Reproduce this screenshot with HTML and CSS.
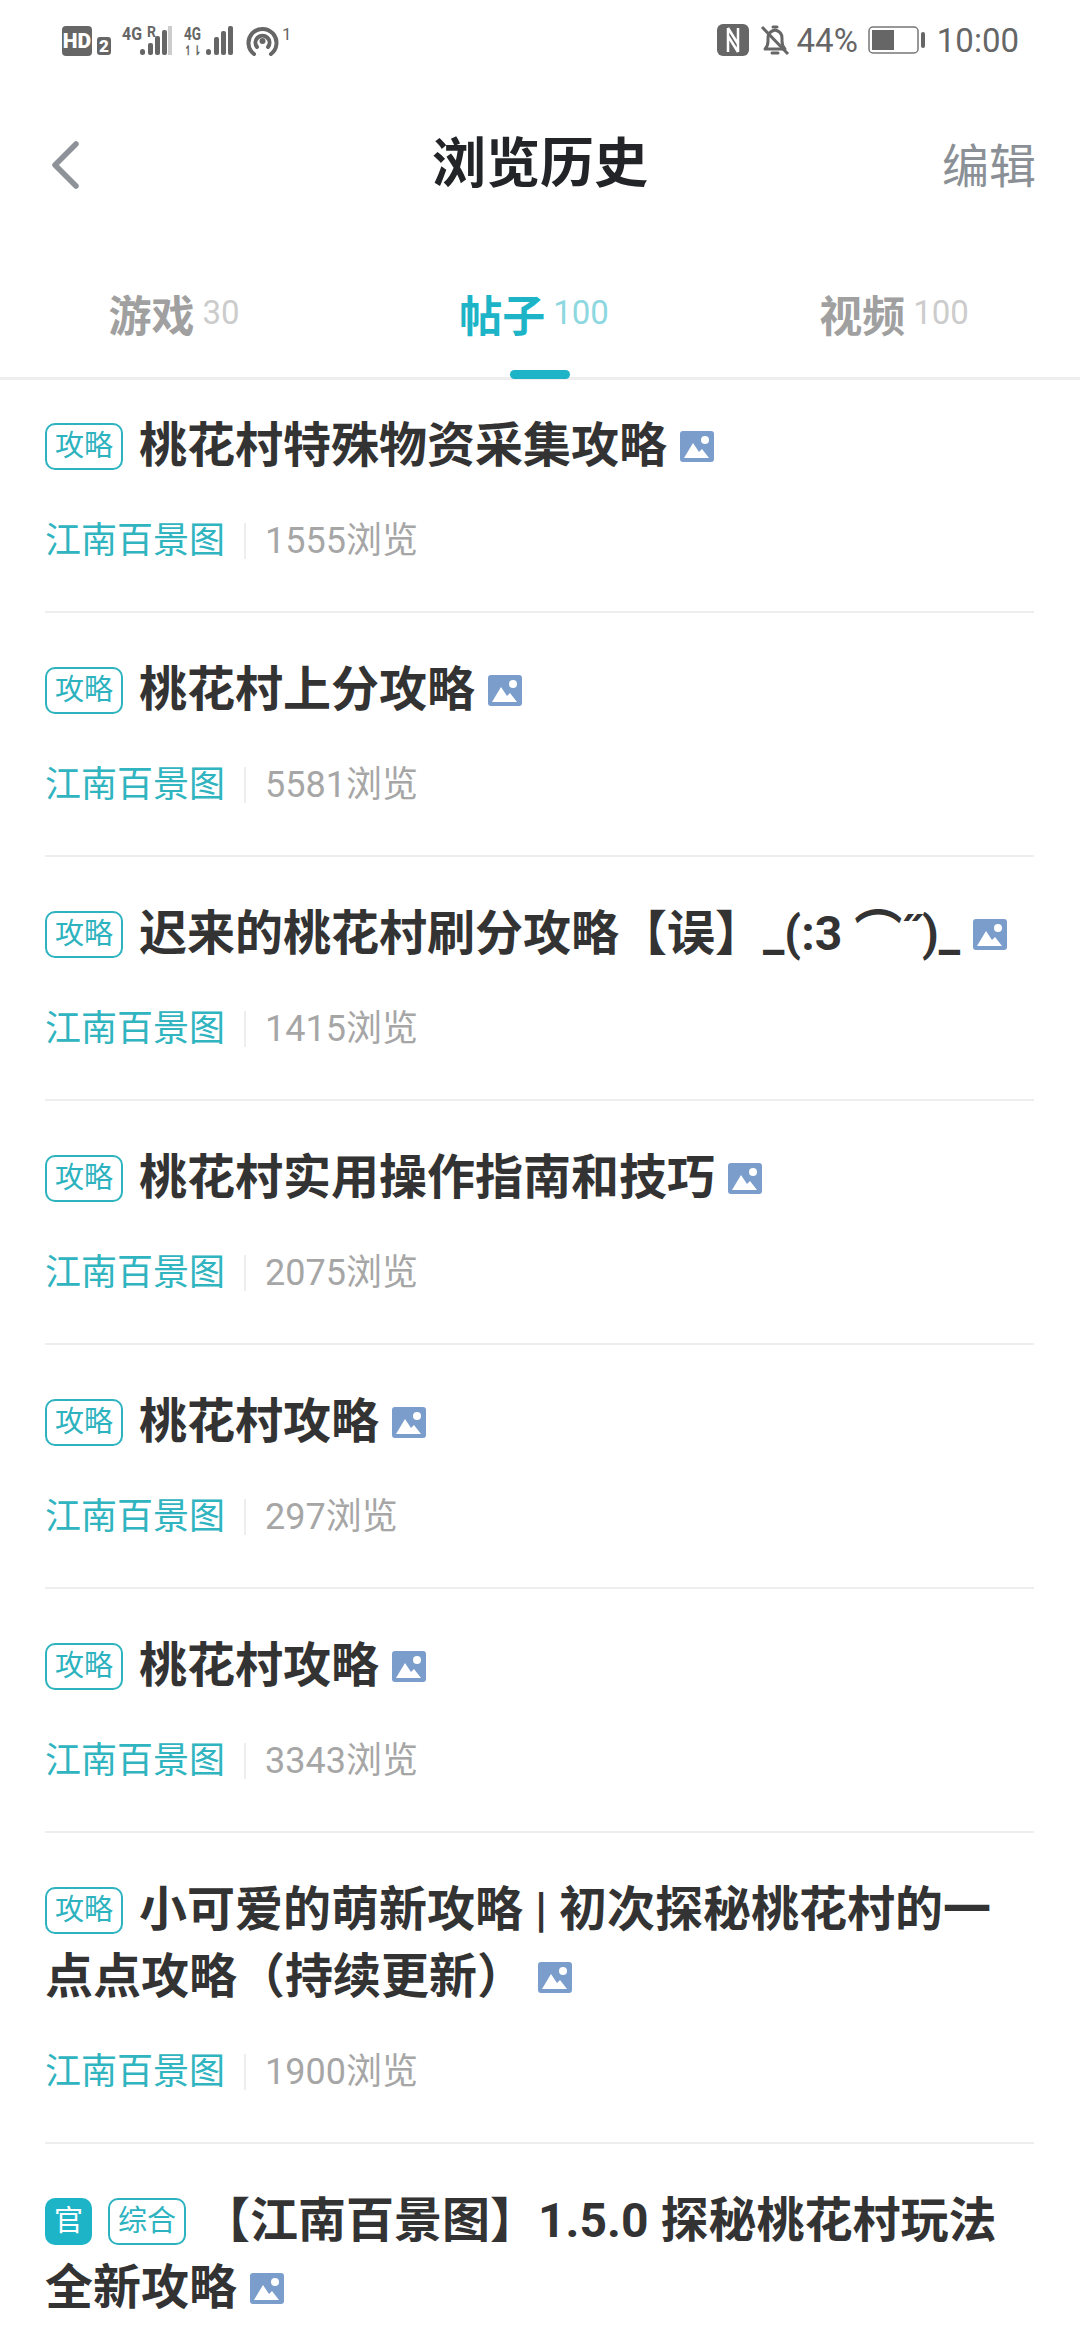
FILE: index.html
```html
<!DOCTYPE html>
<html lang="zh-CN">
<head>
    <meta charset="UTF-8">
    <meta name="viewport" content="width=device-width, initial-scale=1.0">
    <title>浏览历史</title>
    <link rel="stylesheet" href="styles.css">
</head>
<body>
<div class="page">

    <div class="status-bar">
        <svg class="status-left" width="232" height="40" viewBox="0 0 232 40">
            <rect x="0" y="4" width="30" height="30" rx="4" fill="#666"/>
            <text x="15" y="26" class="sb-hd">HD</text>
            <rect x="35" y="15" width="14" height="18" rx="3" fill="#666"/>
            <text x="42" y="30" class="sb-two">2</text>
            <text x="60" y="18" class="sb-net" textLength="20" lengthAdjust="spacingAndGlyphs">4G</text>
            <text x="85" y="15" class="sb-r">R</text>
            <g fill="#666">
                <rect x="78" y="27" width="5" height="6" rx="2.500"/>
                <rect x="86" y="21" width="5" height="12" rx="2"/>
                <rect x="93" y="14" width="5" height="19" rx="2"/>
                <rect x="100" y="8" width="5" height="25" rx="2"/>
            </g>
            <rect x="106" y="4" width="4" height="29" fill="#ccc"/>
            <text x="122" y="18" class="sb-net" textLength="17" lengthAdjust="spacingAndGlyphs">4G</text>
            <text x="122" y="33" class="sb-arrows" textLength="17" lengthAdjust="spacingAndGlyphs">↿⇂</text>
            <g fill="#666">
                <rect x="144" y="27" width="5" height="6" rx="2.500"/>
                <rect x="152" y="15" width="5" height="18" rx="2"/>
                <rect x="159" y="9" width="5" height="24" rx="2"/>
                <rect x="166" y="4" width="5" height="29" rx="2"/>
            </g>
            <g fill="none" stroke="#666" stroke-width="4" stroke-linecap="round">
                <path d="M192 32a14 14 0 1 1 17 0"/>
                <path d="M195 25a7 7 0 1 1 11 0"/>
            </g>
            <circle cx="200.500" cy="19" r="3" fill="#666"/>
            <text x="220" y="18" class="sb-one">1</text>
        </svg>
        <div class="status-right">
            <svg width="32" height="32" viewBox="0 0 32 32">
                <rect x="0" y="0" width="32" height="32" rx="6" fill="#666"/>
                <path d="M11 4v24M21 4v24M11 4l10 16M11 12l10 16" stroke="#fff" stroke-width="2.500" fill="none"/>
            </svg>
            <svg class="bell" width="30" height="32" viewBox="0 0 30 32">
                <path d="M5 25c2-2 3-4 3-8v-3c0-4 3-7 7-8 4 1 7 4 7 8v3c0 4 1 6 3 8z" fill="none" stroke="#666" stroke-width="3" stroke-linejoin="round"/>
                <path d="M12 29h6M13 3h4" stroke="#666" stroke-width="3" stroke-linecap="round"/>
                <path d="M2 3l26 27" stroke="#666" stroke-width="3"/>
            </svg>
            <span class="sb-pct">44%</span>
            <svg class="battery" width="58" height="28" viewBox="0 0 58 28">
                <rect x="1" y="1" width="49" height="26" rx="4" fill="none" stroke="#777" stroke-width="1.500"/>
                <rect x="4" y="4" width="22" height="20" fill="#666"/>
                <rect x="53" y="6" width="4" height="16" rx="2" fill="#666"/>
            </svg>
            <span class="sb-time">10:00</span>
        </div>
    </div>

    <div class="nav">
        <svg class="nav-back" width="30" height="50" viewBox="0 0 30 50">
            <path d="M26 4L5 25l21 21" fill="none" stroke="#8e939a" stroke-width="5.500" stroke-linecap="round" stroke-linejoin="round"/>
        </svg>
        <h1 class="nav-title">浏览历史</h1>
        <span class="nav-edit">编辑</span>
    </div>

    <div class="tabs">
        <div class="tab"><b>游戏</b><span>30</span></div>
        <div class="tab active"><b>帖子</b><span>100</span></div>
        <div class="tab"><b>视频</b><span>100</span></div>
    </div>

    <div class="list" id="postList"></div>
</div>

<script>
    const posts = [
        { title: '桃花村特殊物资采集攻略', views: 1555 },
        { title: '桃花村上分攻略', views: 5581 },
        { title: '迟来的桃花村刷分攻略【误】_(:3 ⌒˝)_', views: 1415 },
        { title: '桃花村实用操作指南和技巧', views: 2075 },
        { title: '桃花村攻略', views: 297 },
        { title: '桃花村攻略', views: 3343 },
        { title: '小可爱的萌新攻略 | 初次探秘桃花村的一点点攻略（持续更新）', views: 1900 },
        { title: '【江南百景图】1.5.0 探秘桃花村玩法全新攻略', official: true, tag: '综合' }
    ];

    const imageIcon = '<svg class="img-icon" width="34" height="31" viewBox="0 0 34 31">' +
        '<rect width="34" height="31" rx="3" fill="#7b9dcb"/>' +
        '<circle cx="25" cy="9" r="4" fill="#fff"/>' +
        '<path d="M4 27l9-15 6 9 3-3 7 9z" fill="#fff"/></svg>';

    function loadPosts() {
        const list = document.getElementById('postList');
        posts.forEach(post => {
            let tags = '<span class="tag">' + (post.tag || '攻略') + '</span>';
            if (post.official) {
                tags = '<span class="tag-official">官</span>' + tags;
            }
            const row = document.createElement('div');
            row.className = 'post';
            let html = '<div class="post-title">' + tags + post.title + imageIcon + '</div>';
            // the last row runs off the bottom of the screen, before its meta line
            if (post.views) {
                html += '<div class="post-meta"><span class="author">江南百景图</span>' +
                    '<span class="views">' + post.views + '浏览</span></div>';
            }
            row.innerHTML = html;
            list.appendChild(row);
        });
    }

    window.onload = loadPosts;
</script>

</body>
</html>
```

FILE: styles.css
```css
html, body {
    margin: 0;
    padding: 0;
    background-color: #ffffff;
}
body {
    font-family: "Roboto", "Noto Sans CJK SC", sans-serif;
}
.page {
    width: 1080px;
    height: 2340px;
    overflow: hidden;
    position: relative;
}

.status-bar {
    height: 82px;
    padding: 22px 61px 0 62px;
    box-sizing: border-box;
    display: flex;
    justify-content: space-between;
    align-items: flex-start;
}
.status-left {
    display: block;
}
.status-left text {
    font-family: "Roboto", sans-serif;
    fill: #666;
}
.status-left .sb-hd {
    font-size: 21px;
    font-weight: 900;
    text-anchor: middle;
    fill: #fff;
}
.status-left .sb-two {
    font-size: 17px;
    font-weight: 900;
    text-anchor: middle;
    fill: #fff;
}
.sb-net {
    font-size: 19px;
    font-weight: 700;
}
.sb-r {
    font-size: 14px;
    font-weight: 700;
}
.sb-arrows {
    font-size: 13px;
    font-weight: 700;
}
.sb-one {
    font-size: 17px;
}
.status-right {
    display: flex;
    align-items: center;
    height: 36px;
    color: #666;
    font-size: 33px;
}
.bell {
    margin-left: 11px;
}
.sb-pct {
    margin-left: 7px;
}
.battery {
    margin-left: 10px;
}
.sb-time {
    margin-left: 11px;
}

.nav {
    height: 166px;
    padding: 0 44px 0 50px;
    display: flex;
    align-items: center;
    justify-content: space-between;
    position: relative;
}
.nav-title {
    margin: 0 0 12px;
    position: absolute;
    left: 0;
    right: 0;
    text-align: center;
    font-size: 54px;
    font-weight: 700;
    color: #222427;
}
.nav-edit {
    margin-bottom: 6px;
    font-size: 47px;
    color: #8a9095;
}

.tabs {
    height: 132px;
    display: grid;
    grid-template-columns: repeat(3, 1fr);
    border-bottom: 3px solid #eeeeee;
    box-sizing: border-box;
}
.tab {
    display: flex;
    justify-content: center;
    align-items: center;
    padding: 0 12px 0 0;
    position: relative;
    color: #a0a0a0;
}
.tab b {
    font-size: 43px;
}
.tab span {
    margin-left: 8px;
    font-size: 33px;
    color: #cccccc;
}
.tab.active {
    color: #1cb4c6;
}
.tab.active span {
    color: #8dd8e0;
}
.tab.active::after {
    content: "";
    position: absolute;
    left: 150px;
    bottom: -2px;
    width: 60px;
    height: 9px;
    border-radius: 5px;
    background-color: #1cb4c6;
}

.list {
    margin-top: -11px;
}
.post {
    margin: 0 46px 0 45px;
    padding: 43px 0 52px;
    border-bottom: 2px solid #eeeeee;
}
.post-title {
    font-size: 48px;
    font-weight: 700;
    line-height: 67px;
    color: #333333;
}
.tag, .tag-official {
    display: inline-block;
    box-sizing: border-box;
    height: 47px;
    line-height: 42px;
    margin-right: 16px;
    border-radius: 10px;
    font-size: 29px;
    font-weight: 400;
    text-align: center;
    vertical-align: 6px;
}
.tag {
    width: 78px;
    border: 2px solid #2db3bf;
    color: #2db3bf;
}
.tag-official {
    width: 47px;
    line-height: 47px;
    background-color: #1cb4c6;
    color: #ffffff;
}
.img-icon {
    margin-left: 13px;
    vertical-align: 0;
}
.post-meta {
    display: flex;
    align-items: center;
    margin-top: 44px;
    font-size: 36px;
    line-height: 36px;
}
.author {
    color: #2fb4c0;
}
.views {
    margin-left: 19px;
    padding-left: 19px;
    border-left: 2px solid #eeeeee;
    color: #a6a6a6;
}
```
